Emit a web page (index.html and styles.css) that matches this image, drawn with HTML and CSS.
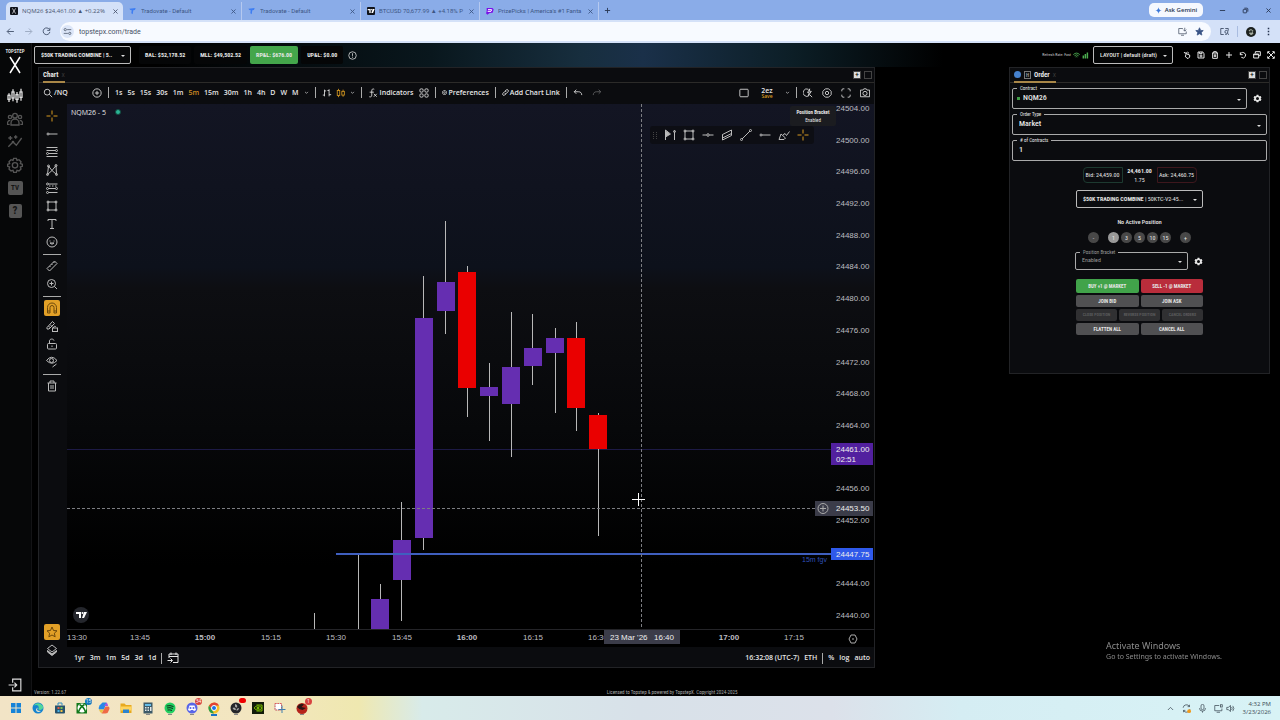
FILE: index.html
```
<!DOCTYPE html>
<html lang="en">
<head>
    <meta charset="UTF-8">
    <meta name="viewport" content="width=device-width, initial-scale=1.0">
    <title>NQM26 $24,461.00 ▲ +0.22%</title>
    <link rel="stylesheet" href="styles.css">
</head>
<body>
    <!-- Shared icons -->
    <svg class="sprite" aria-hidden="true">
        <symbol id="close" viewBox="0 0 24 24"><path d="M5 5l14 14M19 5L5 19"/></symbol>
        <symbol id="plus" viewBox="0 0 24 24"><path d="M12 3v18M3 12h18"/></symbol>
        <symbol id="chevron" viewBox="0 0 24 24"><path d="M5 9l7 7 7-7"/></symbol>
        <symbol id="chevron-up" viewBox="0 0 24 24"><path d="M5 16l7-7 7 7"/></symbol>
        <symbol id="back" viewBox="0 0 24 24"><path d="M21 12H4M11 4l-8 8 8 8"/></symbol>
        <symbol id="forward" viewBox="0 0 24 24"><path d="M3 12h17M13 4l8 8-8 8"/></symbol>
        <symbol id="reload" viewBox="0 0 24 24"><path d="M20 7a9 9 0 1 0 1 6M21 2v7h-7"/></symbol>
        <symbol id="tune" viewBox="0 0 24 24"><circle cx="6" cy="7" r="3"/><circle cx="18" cy="17" r="3"/><path d="M11 7h11M2 17h11"/></symbol>
        <symbol id="monitor" viewBox="0 0 24 24"><path d="M13 4H2v14h20v-6M8 22h8M18 2v9M14 7l4 4 4-4"/></symbol>
        <symbol id="star" viewBox="0 0 24 24"><path d="M12 2l3 7 7 .6-5.300 4.800 1.600 7.200L12 18l-6.300 3.600 1.600-7.200L2 9.600 9 9z"/></symbol>
        <symbol id="reading" viewBox="0 0 24 24"><path d="M10 4H2v16h8M14 4h8v6M14 20h4"/><circle cx="17" cy="13" r="4"/><path d="M20 16l3 5"/></symbol>
        <symbol id="dots" viewBox="0 0 24 24"><path class="solid" d="M10 2h4v4h-4zM10 10h4v4h-4zM10 18h4v4h-4z"/></symbol>
        <symbol id="minimize" viewBox="0 0 24 24"><path d="M3 12h18"/></symbol>
        <symbol id="restore" viewBox="0 0 24 24"><rect x="4" y="8" width="12" height="12" rx="2"/><path d="M8 4h9a3 3 0 0 1 3 3v9"/></symbol>
        <symbol id="tradovate" viewBox="0 0 24 24"><path fill="#3d7df2" stroke="none" d="M1 5l19-2-2 6-5 1-2 12-4-3 1-9-4-1z"/></symbol>
        <symbol id="tv" viewBox="0 0 24 24"><path class="solid" d="M2 6h9v12H7v-8H2zM17 6h6l-5 12h-5z"/><circle class="solid" cx="14" cy="8" r="2"/></symbol>
        <symbol id="candles" viewBox="0 0 24 24"><path d="M3 8v3M3 17v4M9 2v4M9 15v5M15 6v4M15 17v5M21 1v5M21 14v5"/><rect x="1.500" y="11" width="3" height="6"/><rect x="7.500" y="6" width="3" height="9"/><rect x="13.500" y="10" width="3" height="7"/><rect x="19.500" y="6" width="3" height="8"/></symbol>
        <symbol id="people" viewBox="0 0 24 24"><circle cx="12" cy="7" r="3.500"/><circle cx="4.500" cy="9" r="2.500"/><circle cx="19.500" cy="9" r="2.500"/><path d="M6 21v-3a6 6 0 0 1 12 0v3zM5 14c-3 0-4.500 2-4.500 6H4M19 14c3 0 4.500 2 4.500 6H20"/></symbol>
        <symbol id="insights" viewBox="0 0 24 24"><path d="M2 19l7-7 5 5 8-11M5 3v6M2 6h6M13 2v5M10.500 4.500h5"/><circle cx="9" cy="12" r="1"/></symbol>
        <symbol id="gear" viewBox="0 0 24 24"><path d="M10 2h4l1 3 3-1 3 3-1 3 3 1v3l-3 1 1 3-3 3-3-1-1 3h-4l-1-3-3 1-3-3 1-3-3-1v-3l3-1-1-3 3-3 3 1z"/><circle cx="12" cy="12.500" r="4"/></symbol>
        <symbol id="cog" viewBox="0 0 24 24"><path class="solid" fill-rule="evenodd" d="M9.500 2h5l.7 3 2 1.200 3-1L22.500 9.500 20.300 12l2.200 2.500-2.300 4.300-3-1-2 1.200-.7 3h-5l-.7-3-2-1.200-3 1-2.300-4.300L3.700 12 1.500 9.500l2.300-4.300 3 1 2-1.200zM12 8a4 4 0 1 0 0 8 4 4 0 0 0 0-8z"/></symbol>
        <symbol id="exit" viewBox="0 0 24 24"><path d="M8 8V2h14v20H8v-6M1 12h14M11 8l4 4-4 4"/></symbol>
        <symbol id="info" viewBox="0 0 24 24"><circle cx="12" cy="12" r="10"/><path d="M12 6v7M12 15v3"/></symbol>
        <symbol id="wifi" viewBox="0 0 24 24"><path d="M1 9a16 16 0 0 1 22 0M5 13a10 10 0 0 1 14 0M9 17a5 5 0 0 1 6 0"/></symbol>
        <symbol id="bars" viewBox="0 0 24 24"><path class="solid" d="M2 12h5v10H2zM9 7h5v15H9zM16 2h5v20h-5z"/></symbol>
        <symbol id="touch" viewBox="0 0 24 24"><path d="M9 13V4l3 5 8 3v6l-4 4h-4l-6-7zM3 3l4 5M13 3l5 4"/></symbol>
        <symbol id="save" viewBox="0 0 24 24"><path d="M3 3h14l4 4v14H3zM7 3v5h8V3"/><circle cx="12" cy="15" r="3"/></symbol>
        <symbol id="trash" viewBox="0 0 24 24"><path d="M3 6h18M8 6V2h8v4M5 6v16h14V6M10 10v8M14 10v8"/></symbol>
        <symbol id="undo" viewBox="0 0 24 24"><path d="M4 4v7h7M4 11a8 8 0 1 1 3 8"/></symbol>
        <symbol id="windows" viewBox="0 0 24 24"><path d="M7 7V2h15v12h-5M2 9h15v12H2zM2 11h15"/></symbol>
        <symbol id="expand" viewBox="0 0 24 24"><path d="M3 3l18 18M21 3L3 21M2 8V2h6M16 2h6v6M22 16v6h-6M8 22H2v-6"/></symbol>
        <symbol id="search" viewBox="0 0 24 24"><circle cx="10" cy="10" r="7"/><path d="M15 15l7 7"/></symbol>
        <symbol id="add" viewBox="0 0 24 24"><circle cx="12" cy="12" r="10"/><path d="M12 7v10M7 12h10"/></symbol>
        <symbol id="ohlc" viewBox="0 0 24 24"><path d="M6 4v16M2 17h4M6 7h4M17 3v17M13 6h4M17 16h5"/></symbol>
        <symbol id="candle-type" viewBox="0 0 24 24"><path d="M6 2v4M6 18v4M17 4v4M17 17v4"/><rect x="3" y="6" width="6" height="12"/><rect x="14" y="8" width="6" height="9"/></symbol>
        <symbol id="fx" viewBox="0 0 24 24"><path d="M15 3c-4-2-6 0-6 4v10c0 4-2 5-6 4M4 10h10M14 14l7 7M21 14l-7 7"/></symbol>
        <symbol id="grid" viewBox="0 0 24 24"><rect x="2" y="2" width="8" height="8" rx="3"/><rect x="14" y="2" width="8" height="8" rx="3"/><rect x="2" y="14" width="8" height="8" rx="3"/><rect x="14" y="14" width="8" height="8" rx="3"/></symbol>
        <symbol id="link" viewBox="0 0 24 24"><path d="M10 8l5-5c4-3 9 2 6 6l-6 6c-2 2-5 1-6-1M14 16l-5 5c-4 3-9-2-6-6l6-6c2-2 5-1 6 1"/></symbol>
        <symbol id="arrow-undo" viewBox="0 0 24 24"><path d="M8 4L3 9l5 5M3 9h10c5 0 8 3 8 8"/></symbol>
        <symbol id="arrow-redo" viewBox="0 0 24 24"><path d="M16 4l5 5-5 5M21 9H11c-5 0-8 3-8 8"/></symbol>
        <symbol id="square" viewBox="0 0 24 24"><rect x="2" y="3" width="20" height="18" rx="2"/></symbol>
        <symbol id="quick-search" viewBox="0 0 24 24"><path d="M15 18A9 9 0 1 1 13 3M16 16l6 6M16 2l-5 9h4l-2 7 7-10h-5z"/></symbol>
        <symbol id="settings" viewBox="0 0 24 24"><path d="M8 2h8l6 6v8l-6 6H8l-6-6V8z"/><circle cx="12" cy="12" r="4"/></symbol>
        <symbol id="fullscreen" viewBox="0 0 24 24"><path d="M2 8V5q0-3 3-3h3M16 2h3q3 0 3 3v3M22 16v3q0 3-3 3h-3M8 22H5q-3 0-3-3v-3"/></symbol>
        <symbol id="camera" viewBox="0 0 24 24"><path d="M1 5h6l2-3h6l2 3h6v16H1z"/><circle cx="12" cy="13" r="5"/></symbol>
        <symbol id="cross" viewBox="0 0 24 24"><path d="M12 1v8M12 15v8M1 12h8M15 12h8"/></symbol>
        <symbol id="ray" viewBox="0 0 24 24"><circle cx="4" cy="12" r="2"/><path d="M6 12h17"/></symbol>
        <symbol id="fib" viewBox="0 0 24 24"><path d="M1 3h22M1 9h18M5 15h18M1 21h22"/><circle cx="21" cy="9" r="2"/><circle cx="3" cy="15" r="2"/></symbol>
        <symbol id="pattern" viewBox="0 0 24 24"><path d="M3 21L5 4l7 9 8-10 1 18-9-8z"/><circle cx="3" cy="21" r="2"/><circle cx="5" cy="4" r="2"/><circle cx="20" cy="3" r="2"/><circle cx="21" cy="21" r="2"/></symbol>
        <symbol id="position" viewBox="0 0 24 24"><circle cx="3" cy="4" r="2"/><circle cx="3" cy="13" r="2"/><circle cx="21" cy="13" r="2"/><circle cx="3" cy="21" r="2"/><path d="M5 4h18M5 13h14M5 21h18M6 8h3M12 8h3M18 8h3"/></symbol>
        <symbol id="rect" viewBox="0 0 24 24"><rect x="4" y="4" width="16" height="16"/><circle cx="4" cy="4" r="2"/><circle cx="20" cy="4" r="2"/><circle cx="4" cy="20" r="2"/><circle cx="20" cy="20" r="2"/></symbol>
        <symbol id="text-tool" viewBox="0 0 24 24"><path d="M4 6V3h16v3M12 3v18M8 21h8"/></symbol>
        <symbol id="smile" viewBox="0 0 24 24"><circle cx="12" cy="12" r="10"/><path d="M8 9v2M16 9v2M8 14h8q-4 5-8 0z"/></symbol>
        <symbol id="ruler" viewBox="0 0 24 24"><path d="M2 17L17 2l5 5L7 22zM7 12l2 2M11 8l2 2M15 4l2 2"/></symbol>
        <symbol id="zoom-in" viewBox="0 0 24 24"><circle cx="11" cy="11" r="8"/><path d="M17 17l5 5M11 7v8M7 11h8"/></symbol>
        <symbol id="magnet" viewBox="0 0 24 24"><path d="M3 22V11a9 9 0 0 1 18 0v11h-5V11a4 4 0 0 0-8 0v11zM3 18h5M16 18h5"/></symbol>
        <symbol id="draw-lock" viewBox="0 0 24 24"><path d="M2 15L13 3l4 4L6 18H2zM5 12l4 4M8 9l4 4M15 16v-2a3 3 0 0 1 5 0"/><rect x="13" y="16" width="10" height="7"/></symbol>
        <symbol id="lock" viewBox="0 0 24 24"><rect x="3" y="11" width="18" height="11" rx="2"/><path d="M7 11V6c0-5 8-5 9-1M12 15v3"/></symbol>
        <symbol id="eye" viewBox="0 0 24 24"><path d="M1 9q10-13 21 0Q12 20 1 9z"/><circle cx="11" cy="9" r="4"/><path d="M13 22l8-6"/></symbol>
        <symbol id="layers" viewBox="0 0 24 24"><path d="M12 2l9 7-9 7-9-7z"/><path class="filled" d="M3 13l9 7 9-7v3l-9 7-9-7z"/></symbol>
        <symbol id="calendar" viewBox="0 0 24 24"><path d="M4 12V4h18v17H12M4 9h18M8 1v5M18 1v5M1 17h9M7 13l4 4-4 4"/></symbol>
        <symbol id="flag" viewBox="0 0 24 24"><path d="M3 22V2l10 8-10 6M21 22V6M19 6l2-4 2 4z"/><path class="filled" d="M4 5l7 5-7 4z"/></symbol>
        <symbol id="hline" viewBox="0 0 24 24"><path d="M1 12h8M15 12h8"/><circle cx="12" cy="12" r="2.500"/></symbol>
        <symbol id="channel" viewBox="0 0 24 24"><path d="M3 11L21 2v7L3 18zM3 22l18-9M3 11v11M21 2v11"/></symbol>
        <symbol id="trend" viewBox="0 0 24 24"><path d="M4 20L20 4"/><circle cx="3" cy="21" r="2"/><circle cx="21" cy="3" r="2"/></symbol>
        <symbol id="brush" viewBox="0 0 24 24"><path d="M2 21L6 10l9 8-3 3zM10 12l4-3 3 4 6-8"/></symbol>
        <symbol id="sync" viewBox="0 0 24 24"><path d="M3 10a9 9 0 0 1 17-3M20 2v5h-5M21 14a9 9 0 0 1-17 3M4 22v-5h5"/><circle cx="19" cy="19" r="5" fill="#f09a1a" stroke="none"/></symbol>
        <symbol id="mic" viewBox="0 0 24 24"><rect x="8" y="1" width="8" height="14" rx="4"/><path d="M4 11a8 8 0 0 0 16 0M12 19v4"/></symbol>
        <symbol id="network" viewBox="0 0 24 24"><path d="M14 4H2v14h19v-6M7 22h9"/><rect x="17" y="2" width="5" height="6"/></symbol>
        <symbol id="speaker" viewBox="0 0 24 24"><path d="M2 9h4l6-5v16l-6-5H2zM15 8q3 4 0 8M18 5q6 7 0 14"/></symbol>
    </svg>

    <!-- Browser window -->
    <div class="browser">
        <div class="tabs">
            <div class="tab active">
                <svg class="favicon dark" viewBox="0 0 24 24"><path d="M7 4l10 16M17 4L7 20"/></svg>
                <span class="tab-title">NQM26 $24,461.00 ▲ +0.22%</span>
                <svg class="icon tiny"><use href="#close"/></svg>
            </div>
            <div class="tab">
                <svg class="favicon"><use href="#tradovate"/></svg>
                <span class="tab-title">Tradovate - Default</span>
                <svg class="icon tiny"><use href="#close"/></svg>
            </div>
            <div class="tab">
                <svg class="favicon"><use href="#tradovate"/></svg>
                <span class="tab-title">Tradovate - Default</span>
                <svg class="icon tiny"><use href="#close"/></svg>
            </div>
            <div class="tab">
                <svg class="favicon dark"><use href="#tv"/></svg>
                <span class="tab-title">BTCUSD 70,677.99 ▲ +4.18% P</span>
                <svg class="icon tiny"><use href="#close"/></svg>
            </div>
            <div class="tab">
                <svg class="favicon" viewBox="0 0 24 24"><path fill="#7a10e8" d="M2 3h17l4 4-3 10-9 1-7 5-4-4 2-6z"/><path stroke="#fff" stroke-width="3" fill="none" d="M6 8h11l-2 5H5"/></svg>
                <span class="tab-title">PrizePicks | America's #1 Fanta</span>
                <svg class="icon tiny"><use href="#close"/></svg>
            </div>
            <button class="new-tab" aria-label="New tab"><svg class="icon tiny"><use href="#plus"/></svg></button>
            <div class="window-buttons">
                <button class="gemini"><svg viewBox="0 0 24 24"><path fill="#3c78d8" d="M12 1q1 10 11 11-10 1-11 11Q11 13 1 12 11 11 12 1z"/></svg>Ask Gemini</button>
                <button aria-label="Minimize"><svg class="icon tiny"><use href="#minimize"/></svg></button>
                <button aria-label="Restore"><svg class="icon tiny"><use href="#restore"/></svg></button>
                <button aria-label="Close"><svg class="icon tiny"><use href="#close"/></svg></button>
            </div>
        </div>
        <div class="address-bar">
            <button aria-label="Back"><svg class="icon small"><use href="#back"/></svg></button>
            <button class="faded" aria-label="Forward"><svg class="icon small"><use href="#forward"/></svg></button>
            <button aria-label="Reload"><svg class="icon small"><use href="#reload"/></svg></button>
            <div class="omnibox">
                <span class="site-info"><svg class="icon small"><use href="#tune"/></svg></span>
                <input type="text" aria-label="Address" value="topstepx.com/trade">
                <svg class="icon small"><use href="#monitor"/></svg>
                <svg class="icon small bookmark"><use href="#star"/></svg>
            </div>
            <div class="extensions">
                <svg class="icon small"><use href="#reading"/></svg>
                <span class="line"></span>
                <svg class="avatar" viewBox="0 0 24 24"><circle cx="12" cy="12" r="12" fill="#1c211f"/><path fill="#a5aca0" d="M6 8l6-3 6 4-2 3 2 4-6 4-5-5 3-3z"/><circle cx="12" cy="11" r="3" fill="#29302b"/></svg>
                <svg class="icon small"><use href="#dots"/></svg>
            </div>
        </div>
    </div>

    <!-- TopstepX -->
    <div class="app">
        <nav class="sidebar">
            <div class="logo"><span>TOPSTEP</span><svg viewBox="0 0 24 36"><path d="M2 2l20 32M22 2L2 34"/></svg></div>
            <a href="#" class="on" aria-label="Trade"><svg class="icon"><use href="#candles"/></svg></a>
            <a href="#" aria-label="Community"><svg class="icon"><use href="#people"/></svg></a>
            <a href="#" aria-label="Insights"><svg class="icon"><use href="#insights"/></svg></a>
            <a href="#" aria-label="Settings"><svg class="icon"><use href="#gear"/></svg></a>
            <a href="#"><span class="tv-badge">TV</span></a>
            <a href="#"><span class="tv-badge help">?</span></a>
            <a href="#" class="on exit" aria-label="Log out"><svg class="icon"><use href="#exit"/></svg></a>
        </nav>

        <div class="page">
            <header class="header">
                <div class="select account">
                    <select aria-label="Account"><option>$50K TRADING COMBINE | 5..</option></select>
                </div>
                <div class="stats">
                    <span class="stat">BAL: $52,178.52</span>
                    <span class="stat">MLL: $49,502.52</span>
                    <span class="stat profit">RP&amp;L: $676.00</span>
                    <span class="stat">UP&amp;L: $0.00</span>
                </div>
                <svg class="icon small info"><use href="#info"/></svg>
                <div class="header-right">
                    <span class="refresh">Refresh Rate: Fast</span>
                    <svg class="icon tiny green"><use href="#wifi"/></svg>
                    <svg class="icon tiny green"><use href="#bars"/></svg>
                    <div class="select layout">
                        <select aria-label="Layout"><option>LAYOUT | default (draft)</option></select>
                    </div>
                    <div class="header-icons">
                        <button aria-label="Click trading"><svg class="icon"><use href="#touch"/></svg></button>
                        <button aria-label="Save"><svg class="icon"><use href="#save"/></svg></button>
                        <button aria-label="Delete"><svg class="icon"><use href="#trash"/></svg></button>
                        <button aria-label="Add"><svg class="icon"><use href="#plus"/></svg></button>
                        <button aria-label="Reset"><svg class="icon"><use href="#undo"/></svg></button>
                        <button aria-label="Windows"><svg class="icon"><use href="#windows"/></svg></button>
                        <button aria-label="Full screen"><svg class="icon"><use href="#expand"/></svg></button>
                    </div>
                </div>
            </header>

            <main class="workspace">
                <section class="panel chart-panel">
                    <div class="panel-tabs">
                        <span class="panel-tab">Chart <i>X</i></span>
                        <button class="dock add" aria-label="Add tab">+</button>
                        <button class="dock" aria-label="Maximize"></button>
                    </div>
                    <div class="chart-toolbar">
                        <button class="symbol"><svg class="icon small"><use href="#search"/></svg>/NQ</button>
                        <button aria-label="Compare"><svg class="icon"><use href="#add"/></svg></button>
                        <span class="line"></span>
                        <div class="intervals">
                            <button>1s</button><button>5s</button><button>15s</button><button>30s</button><button>1m</button><button class="selected">5m</button><button>15m</button><button>30m</button><button>1h</button><button>4h</button><button>D</button><button>W</button><button>M</button>
                            <svg class="icon mini"><use href="#chevron"/></svg>
                        </div>
                        <span class="line"></span>
                        <div class="chart-types">
                            <svg class="icon small"><use href="#ohlc"/></svg>
                            <svg class="icon small gold"><use href="#candle-type"/></svg>
                            <svg class="icon mini"><use href="#chevron"/></svg>
                        </div>
                        <span class="line"></span>
                        <button class="indicators"><svg class="icon small"><use href="#fx"/></svg>Indicators</button>
                        <button aria-label="Templates"><svg class="icon small"><use href="#grid"/></svg></button>
                        <span class="line"></span>
                        <button class="preferences"><svg class="icon mini"><use href="#gear"/></svg>Preferences</button>
                        <span class="line"></span>
                        <button class="chart-link"><svg class="icon tiny"><use href="#link"/></svg>Add Chart Link</button>
                        <span class="line"></span>
                        <div class="history">
                            <button aria-label="Undo"><svg class="icon small"><use href="#arrow-undo"/></svg></button>
                            <button class="faded" aria-label="Redo"><svg class="icon small"><use href="#arrow-redo"/></svg></button>
                        </div>
                        <div class="toolbar-right">
                            <svg class="icon"><use href="#square"/></svg>
                            <button class="save-layout">2ez<span>Save</span></button>
                            <svg class="icon mini"><use href="#chevron"/></svg>
                            <span class="line"></span>
                            <div class="chart-actions">
                                <button aria-label="Quick search"><svg class="icon"><use href="#quick-search"/></svg></button>
                                <button aria-label="Chart settings"><svg class="icon"><use href="#settings"/></svg></button>
                                <button aria-label="Full screen"><svg class="icon"><use href="#fullscreen"/></svg></button>
                                <button aria-label="Snapshot"><svg class="icon"><use href="#camera"/></svg></button>
                            </div>
                        </div>
                    </div>

                    <div class="chart-body">
                        <div class="draw-tools">
                            <button class="gold" aria-label="Cross"><svg class="icon"><use href="#cross"/></svg></button>
                            <button aria-label="Lines"><svg class="icon"><use href="#ray"/></svg></button>
                            <button aria-label="Fibonacci"><svg class="icon"><use href="#fib"/></svg></button>
                            <button aria-label="Patterns"><svg class="icon"><use href="#pattern"/></svg></button>
                            <button aria-label="Positions"><svg class="icon"><use href="#position"/></svg></button>
                            <button aria-label="Shapes"><svg class="icon"><use href="#rect"/></svg></button>
                            <button aria-label="Text"><svg class="icon"><use href="#text-tool"/></svg></button>
                            <button aria-label="Icons"><svg class="icon"><use href="#smile"/></svg></button>
                            <hr>
                            <button aria-label="Measure"><svg class="icon"><use href="#ruler"/></svg></button>
                            <button aria-label="Zoom in"><svg class="icon"><use href="#zoom-in"/></svg></button>
                            <hr>
                            <button class="highlight" aria-label="Magnet"><svg class="icon"><use href="#magnet"/></svg></button>
                            <button aria-label="Stay in drawing mode"><svg class="icon"><use href="#draw-lock"/></svg></button>
                            <button aria-label="Lock"><svg class="icon"><use href="#lock"/></svg></button>
                            <button aria-label="Hide"><svg class="icon"><use href="#eye"/></svg></button>
                            <hr>
                            <button aria-label="Remove"><svg class="icon"><use href="#trash"/></svg></button>
                            <div class="spacer"></div>
                            <button class="highlight" aria-label="Favorites"><svg class="icon"><use href="#star"/></svg></button>
                            <button aria-label="Object tree"><svg class="icon"><use href="#layers"/></svg></button>
                        </div>

                        <div class="chart-main">
                            <div class="plot">
                                <svg class="plot-svg" viewBox="67 104 807 543" preserveAspectRatio="xMaxYMin slice">
                                    <!-- last price -->
                                    <path class="last-line" d="M67 449.500H831"/>
                                    <!-- candles -->
                                    <path class="wicks" d="M314.500 613V629M358.500 554V629M380.500 584V629M401.500 502V621M423.500 276V550M445.500 221V334M467.500 266V417M489.500 363V441M511.500 312V457M532.500 314V385M555.500 328V413M576.500 322V431M598.500 413V536"/>
                                    <g class="up">
                                        <rect x="371" y="599" width="18" height="30"/>
                                        <rect x="393" y="540" width="18" height="40"/>
                                        <rect x="415" y="318" width="18" height="220"/>
                                        <rect x="437" y="282" width="18" height="29"/>
                                        <rect x="480" y="387" width="18" height="9"/>
                                        <rect x="502" y="367" width="18" height="37"/>
                                        <rect x="524" y="348" width="18" height="18"/>
                                        <rect x="546" y="338" width="18" height="15"/>
                                    </g>
                                    <g class="down">
                                        <rect x="458" y="272" width="18" height="116"/>
                                        <rect x="567" y="338" width="18" height="70"/>
                                        <rect x="589" y="415" width="18" height="34"/>
                                    </g>
                                    <!-- fvg level and crosshair -->
                                    <path class="level" d="M336 554H831"/>
                                    <text class="level-name" x="802" y="562">15m fgv</text>
                                    <path class="crosshair" d="M67 508.500H816M641.500 104V629"/>
                                    <path class="pointer" d="M632 499.500H645M638.500 493V506"/>
                                    <path class="axis-line" d="M67 629.500H874"/>
                                    <!-- price scale -->
                                    <g class="axis">
                                        <text x="836" y="111">24504.00</text>
                                        <text x="836" y="143">24500.00</text>
                                        <text x="836" y="174">24496.00</text>
                                        <text x="836" y="206">24492.00</text>
                                        <text x="836" y="238">24488.00</text>
                                        <text x="836" y="269">24484.00</text>
                                        <text x="836" y="301">24480.00</text>
                                        <text x="836" y="333">24476.00</text>
                                        <text x="836" y="365">24472.00</text>
                                        <text x="836" y="396">24468.00</text>
                                        <text x="836" y="428">24464.00</text>
                                        <text x="836" y="491">24456.00</text>
                                        <text x="836" y="523">24452.00</text>
                                        <text x="836" y="586">24444.00</text>
                                        <text x="836" y="618">24440.00</text>
                                    </g>
                                    <rect x="831" y="443" width="42" height="22" fill="#52209f"/>
                                    <rect x="815" y="501" width="58" height="15" fill="#3b3c49"/>
                                    <rect x="831" y="548" width="42" height="12" fill="#2f59ea"/>
                                    <g class="axis marks">
                                        <text x="836" y="452">24461.00</text>
                                        <text x="836" y="462">02:51</text>
                                        <text x="836" y="511">24453.50</text>
                                        <text x="836" y="557">24447.75</text>
                                    </g>
                                    <path class="axis-add" d="M820 508.500h6M823 505.500v6M828 508.500a5 5 0 1 1-10 0a5 5 0 1 1 10 0"/>
                                    <!-- time scale -->
                                    <g class="axis time">
                                        <text x="77" y="640">13:30</text>
                                        <text x="140" y="640">13:45</text>
                                        <text class="hour" x="205" y="640">15:00</text>
                                        <text x="271" y="640">15:15</text>
                                        <text x="336" y="640">15:30</text>
                                        <text x="402" y="640">15:45</text>
                                        <text class="hour" x="467" y="640">16:00</text>
                                        <text x="533" y="640">16:15</text>
                                        <text x="598" y="640">16:30</text>
                                        <text class="hour" x="729" y="640">17:00</text>
                                        <text x="794" y="640">17:15</text>
                                    </g>
                                    <rect x="604" y="630" width="76" height="14" fill="#3b3c49"/>
                                    <g class="axis marks">
                                        <text x="610" y="640">23 Mar '26</text>
                                        <text x="654" y="640">16:40</text>
                                    </g>
                                    <path class="axis-add" d="M851 635h4l2 4-2 4h-4l-2-4zM852 639h2"/>
                                    <circle cx="81" cy="615" r="8" fill="#24262c"/>
                                    <path fill="#fff" d="M76 612h5v6h-2v-4h-3zM84 612h3l-3 6h-2z"/>
                                    <circle cx="82.500" cy="613" r="1" fill="#fff"/>
                                </svg>
                                <div class="legend">NQM26 - 5 <span class="dot"></span></div>
                                <div class="tooltip"><b>Position Bracket</b>Enabled</div>
                                <div class="favorites">
                                    <span class="grip"></span>
                                    <svg class="icon"><use href="#flag"/></svg>
                                    <svg class="icon"><use href="#rect"/></svg>
                                    <svg class="icon"><use href="#hline"/></svg>
                                    <svg class="icon"><use href="#channel"/></svg>
                                    <svg class="icon"><use href="#trend"/></svg>
                                    <svg class="icon"><use href="#ray"/></svg>
                                    <svg class="icon"><use href="#brush"/></svg>
                                    <svg class="icon gold"><use href="#cross"/></svg>
                                </div>
                            </div>
                            <div class="range-bar">
                                <button>1yr</button><button>3m</button><button>1m</button><button>5d</button><button>3d</button><button>1d</button>
                                <span class="line"></span>
                                <button aria-label="Go to date"><svg class="icon"><use href="#calendar"/></svg></button>
                                <div class="range-right">
                                    <button>16:32:08 (UTC-7)</button><button>ETH</button>
                                    <span class="line"></span>
                                    <button>%</button><button>log</button><button>auto</button>
                                </div>
                            </div>
                        </div>
                    </div>
                </section>

                <section class="panel order-panel">
                    <div class="panel-tabs">
                        <span class="panel-tab"><span class="ball"></span><span class="key">H</span>Order <i>X</i></span>
                        <button class="dock add" aria-label="Add tab">+</button>
                        <button class="dock" aria-label="Maximize"></button>
                    </div>
                    <form class="order-form">
                        <div class="field-row">
                            <div class="field select contract">
                                <label for="contract">Contract</label>
                                <select id="contract"><option>NQM26</option></select>
                            </div>
                            <button type="button" aria-label="Contract settings"><svg class="icon"><use href="#cog"/></svg></button>
                        </div>
                        <div class="field select">
                            <label for="orderType">Order Type</label>
                            <select id="orderType"><option>Market</option></select>
                        </div>
                        <div class="field">
                            <label for="contracts"># of Contracts</label>
                            <input type="text" id="contracts" value="1">
                        </div>

                        <div class="quotes">
                            <span class="quote bid">Bid: 24,459.00</span>
                            <span class="last"><b>24,461.00</b>1.75</span>
                            <span class="quote ask">Ask: 24,460.75</span>
                        </div>

                        <div class="select order-account">
                            <select aria-label="Order account"><option>$50K TRADING COMBINE | 50KTC-V2-45...</option></select>
                            <span class="account-text"><b>$50K TRADING COMBINE</b> | 50KTC-V2-45...</span>
                        </div>
                        <p class="position">No Active Position</p>
                        <div class="sizes">
                            <button type="button" class="step">-</button>
                            <button type="button" class="selected">1</button>
                            <button type="button">3</button>
                            <button type="button">5</button>
                            <button type="button">10</button>
                            <button type="button">15</button>
                            <button type="button" class="step">+</button>
                        </div>
                        <div class="field-row bracket-row">
                            <div class="field select bracket">
                                <label for="bracket">Position Bracket</label>
                                <select id="bracket"><option>Enabled</option></select>
                            </div>
                            <button type="button" aria-label="Bracket settings"><svg class="icon"><use href="#cog"/></svg></button>
                        </div>

                        <div class="order-buttons">
                            <div class="button-row main">
                                <button type="button" class="buy">BUY +1 @ MARKET</button>
                                <button type="button" class="sell">SELL -1 @ MARKET</button>
                            </div>
                            <div class="button-row">
                                <button type="button">JOIN BID</button>
                                <button type="button">JOIN ASK</button>
                            </div>
                            <div class="button-row">
                                <button type="button" disabled>CLOSE POSITION</button>
                                <button type="button" disabled>REVERSE POSITION</button>
                                <button type="button" disabled>CANCEL ORDERS</button>
                            </div>
                            <div class="button-row">
                                <button type="button">FLATTEN ALL</button>
                                <button type="button">CANCEL ALL</button>
                            </div>
                        </div>
                    </form>
                </section>
            </main>

            <footer class="footer">
                <span>Version: 1.22.67</span>
                <span class="license">Licensed to Topstep &amp; powered by TopstepX. Copyright 2024-2025</span>
            </footer>
        </div>
    </div>

    <div class="activate"><strong>Activate Windows</strong>Go to Settings to activate Windows.</div>

    <!-- Windows taskbar -->
    <div class="taskbar">
        <div class="task-icons">
            <svg viewBox="0 0 24 24"><path fill="#1583d8" d="M2 2h9v9H2zM13 2h9v9h-9zM2 13h9v9H2zM13 13h9v9h-9z"/></svg>
            <svg viewBox="0 0 24 24"><circle cx="12" cy="12" r="11" fill="#1683cf"/><path fill="#53d69b" d="M3 7q9-9 18 0 4 7-4 9-5 0-4-3 2-6-4-7z"/><path fill="#f2ead0" d="M12 11q-6 7 6 7-8 5-10-2 0-4 4-5z"/></svg>
            <svg viewBox="0 0 24 24"><path fill="#29536d" d="M2 7h20v14q0 2-2 2H4q-2 0-2-2z"/><path fill="none" stroke="#338fc3" stroke-width="2" d="M8 7V2h8v5"/><path fill="#e85c41" d="M7 10h4v4H7z"/><path fill="#7ec24f" d="M13 10h4v4h-4z"/><path fill="#4cb6e8" d="M7 16h4v4H7z"/><path fill="#f3c342" d="M13 16h4v4h-4z"/></svg>
            <span class="task"><svg viewBox="0 0 24 24"><rect x="1" y="2" width="21" height="21" fill="#12791a"/><circle cx="12" cy="12" r="9" fill="#fff"/><path stroke="#12791a" stroke-width="3" fill="none" d="M5 20Q8 10 17 5M19 20Q16 10 7 5"/></svg><span class="badge blue">15</span></span>
            <svg viewBox="0 0 24 24"><path fill="#2788e6" d="M9 1h8l-5 14H2q-2-2 1-8z"/><path fill="#a356df" d="M17 1q3 2 3 7h-8z"/><path fill="#ef6a46" d="M15 9h6q4 2 0 9-1 5-6 5H7z"/><path fill="#e9c346" d="M2 15h9l-3 7q-4 0-6-7z"/></svg>
            <svg viewBox="0 0 24 24"><path fill="#e7a91e" d="M1 3h8l3 3h11v16H1z"/><path fill="#ffd45d" d="M1 9h22v8H1z"/><path fill="#2b83cf" d="M6 15h12v7H6z"/></svg>
            <svg class="running" viewBox="0 0 24 24"><rect x="3" y="1" width="18" height="22" fill="#3d5a69"/><path fill="#64bce8" d="M6 4h12v4H6z"/><path fill="#e5e8e8" d="M6 10h3v3H6zM11 10h3v3h-3zM6 15h3v3H6zM11 15h3v3h-3zM16 10h3v8h-3z"/></svg>
            <svg class="running" viewBox="0 0 24 24"><circle cx="12" cy="12" r="11" fill="#20ce60"/><path fill="none" stroke="#102d1b" stroke-width="2" d="M5 8q7-2 14 1M6 12q6-2 12 1M7 16q5-1 9 1"/></svg>
            <span class="task running"><svg viewBox="0 0 24 24"><circle cx="12" cy="12" r="11" fill="#5865e8"/><path fill="#fff" d="M7 7h10l3 9-4 2-2-2h-4l-2 2-4-2z"/><circle cx="9" cy="12" r="2" fill="#5865e8"/><circle cx="15" cy="12" r="2" fill="#5865e8"/></svg><span class="badge">34</span></span>
            <svg class="current" viewBox="0 0 24 24"><circle cx="12" cy="12" r="11" fill="#f5c229"/><path fill="#e24335" d="M2 7Q7 0 14 1q6 1 8 6H12L7 14z"/><path fill="#2b9e4b" d="M2 7l6 9 4 7Q3 23 1 14 0 10 2 7z"/><circle cx="12" cy="12" r="5" fill="#1a73e8" stroke="#fff" stroke-width="2"/></svg>
            <span class="task running"><svg viewBox="0 0 24 24"><circle cx="12" cy="12" r="11" fill="#25262a"/><path fill="#aaa" d="M10 4q6 1 4 7-5 1-4-7zM5 12q5-3 7 3-4 3-7-3zM18 12q-1 6-5 5 0-5 5-5z"/></svg><span class="badge red"></span></span>
            <svg viewBox="0 0 24 24"><rect width="24" height="24" fill="#121a0a"/><path fill="none" stroke="#78b900" stroke-width="2" d="M4 12q7-9 16 0-8 9-16 0zM9 6h11v12H9"/><circle cx="12" cy="12" r="3" fill="#78b900"/></svg>
            <svg viewBox="0 0 24 24"><path fill="#fff" stroke="#8a9aaa" d="M2 3h13v13H2z"/><path fill="none" stroke="#e65a58" stroke-width="2" stroke-dasharray="3 2" d="M2 3h13v13H2z"/><path fill="none" stroke="#3e7eae" stroke-width="2" d="M16 7v15M9 15h14"/></svg>
            <span class="task running"><svg viewBox="0 0 24 24"><circle cx="12" cy="13" r="11" fill="#b5241b"/><path fill="#2b1616" d="M2 10q7-10 14-5l-5 5 9 2-7 4q-6 0-11-6z"/></svg><span class="badge">1</span></span>
        </div>
        <div class="tray">
            <svg class="icon small"><use href="#chevron-up"/></svg>
            <svg class="icon small"><use href="#sync"/></svg>
            <svg class="icon small"><use href="#mic"/></svg>
            <span class="tray-pair"><svg class="icon small"><use href="#network"/></svg><svg class="icon small"><use href="#speaker"/></svg></span>
            <span class="clock">4:32 PM<br>3/23/2026</span>
        </div>
    </div>
</body>
</html>
```

FILE: styles.css
```
* {
    box-sizing: border-box;
}

body {
    margin: 0;
    min-height: 100vh;
    display: flex;
    flex-direction: column;
    background: #000;
    color: #e6e6e6;
    font-family: "Roboto Condensed", "Liberation Sans Narrow", Roboto, sans-serif;
    font-size: 7px;
    line-height: 10px;
}

button, input, select {
    font: inherit;
    color: inherit;
    background: none;
    border: none;
    padding: 0;
    margin: 0;
    outline: none;
}

button {
    display: flex;
    align-items: center;
    justify-content: center;
    cursor: pointer;
    white-space: nowrap;
}

a {
    color: inherit;
    text-decoration: none;
}

.sprite {
    display: none;
}

.icon {
    width: 12px;
    height: 12px;
    flex: none;
    fill: none;
    stroke: currentColor;
    stroke-width: 2;
}

.icon.small {
    width: 9px;
    height: 9px;
}

.icon.tiny {
    width: 7px;
    height: 7px;
    stroke-width: 3;
}

.icon.mini {
    width: 5px;
    height: 5px;
    stroke-width: 3;
}

.solid {
    fill: currentColor;
    stroke: none;
}

.filled {
    fill: currentColor;
}

.faded {
    opacity: 0.4;
}

.gold {
    color: #d99a20;
}

.green {
    color: #4caf50;
}

.line {
    width: 1px;
    height: 11px;
    flex: none;
    background: #aaa;
}

/* Browser */
.browser {
    color: #26344f;
    font-family: "Open Sans", "Noto Sans", sans-serif;
}

.tabs {
    display: flex;
    align-items: flex-end;
    height: 20px;
    padding-left: 6px;
    background: #8aace8;
}

.tab {
    display: flex;
    align-items: center;
    width: 119px;
    height: 18px;
    padding: 0 4px 0 6px;
    gap: 4px;
    border-right: 1px solid #b5c9f0;
    color: #3d5684;
    font-family: Roboto, sans-serif;
}

.tab.active {
    width: 117px;
    padding-left: 4px;
    background: #d4e1f8;
    border: none;
    border-radius: 5px 5px 0 0;
    color: #4a5670;
    font-family: "Open Sans", sans-serif;
}

.tab-title {
    flex: 1;
    overflow: hidden;
    white-space: nowrap;
    font-size: 6px;
}

.favicon {
    width: 8px;
    height: 8px;
    flex: none;
}

.favicon.dark {
    background: #10131a;
    border-radius: 1px;
    color: #fff;
    fill: none;
    stroke: #fff;
    stroke-width: 2;
}

.new-tab {
    width: 16px;
    height: 20px;
}

.window-buttons {
    display: flex;
    align-items: center;
    gap: 16px;
    height: 20px;
    margin-left: auto;
    padding-right: 8px;
}

.gemini {
    gap: 3px;
    width: 54px;
    height: 14px;
    background: #f5f8fe;
    border-radius: 5px;
    font-size: 6px;
    font-weight: 600;
}

.gemini svg {
    width: 7px;
    height: 7px;
}

.address-bar {
    display: flex;
    align-items: center;
    gap: 9px;
    height: 23px;
    padding: 0 7px 0 6px;
    background: #d4e1f8;
}

.omnibox {
    display: flex;
    align-items: center;
    flex: 1;
    gap: 5px;
    height: 19px;
    padding: 0 7px 0 1px;
    background: #f7faff;
    border-radius: 10px;
    color: #465164;
}

.omnibox input {
    flex: 1;
    font-family: Roboto, sans-serif;
}

.omnibox .bookmark {
    margin-left: 3px;
}

.site-info {
    display: flex;
    align-items: center;
    justify-content: center;
    width: 13px;
    height: 13px;
    background: #dce6f8;
    border-radius: 50%;
}

.bookmark {
    fill: #3a5486;
    color: #3a5486;
}

.extensions {
    display: flex;
    align-items: center;
    gap: 8px;
}

.extensions .line {
    background: #a9bce0;
}

.avatar {
    width: 10px;
    height: 10px;
}

/* App shell */
.app {
    display: flex;
    flex: 1;
    background: #000;
}

.sidebar {
    display: flex;
    flex-direction: column;
    align-items: center;
    width: 32px;
    padding-right: 1px;
    background: #060708;
    border-right: 1px solid #131315;
    color: #555;
}

.sidebar a {
    display: flex;
    align-items: center;
    justify-content: center;
    height: 23px;
}

.sidebar .icon {
    width: 16px;
    height: 16px;
    stroke-width: 2;
}

.sidebar .on {
    color: #ddd;
}

.sidebar .exit {
    margin-top: auto;
}

.sidebar .exit .icon {
    width: 14px;
    height: 14px;
}

.logo {
    display: flex;
    flex-direction: column;
    align-items: center;
    height: 41px;
    padding-top: 3px;
    color: #ddd;
    font-size: 5px;
    font-weight: bold;
}

.logo svg {
    width: 12px;
    height: 18px;
    fill: none;
    stroke: #fff;
    stroke-width: 3;
}

.tv-badge {
    width: 15px;
    height: 14px;
    border-radius: 2px;
    background: #555;
    color: #141414;
    font-size: 7px;
    font-weight: bold;
    line-height: 14px;
    text-align: center;
}

.tv-badge.help {
    width: 13px;
    font-size: 11px;
}

.page {
    display: flex;
    flex: 1;
    flex-direction: column;
    min-width: 0;
}

.header {
    display: flex;
    align-items: center;
    height: 24px;
    padding: 0 5px 0 2px;
    background: linear-gradient(to right, #000 10%, #09171d 32%, #172e3e 44%, #1a3049 49%, #0c1e26 61%, #000 73%);
}

.select {
    position: relative;
}

.select select {
    width: 100%;
    height: 100%;
    appearance: none;
}

.select::after {
    content: "";
    position: absolute;
    right: 5px;
    top: 50%;
    border: 2px solid transparent;
    border-top-color: #ddd;
    pointer-events: none;
}

.account, .layout, .order-account {
    height: 18px;
    border: 1px solid #bbb;
    border-radius: 2px;
}

.account select, .layout select {
    padding: 0 12px 0 6px;
}

.account {
    width: 97px;
    background: #08090a;
    font-size: 6px;
    font-weight: bold;
}

.stats {
    display: flex;
    gap: 3px;
    margin: 0 5px 0 8px;
}

.stat {
    height: 18px;
    padding: 0 6px;
    background: #050607;
    border-radius: 2px;
    font-size: 6px;
    font-weight: bold;
    line-height: 18px;
    white-space: nowrap;
}

.stat.profit {
    background: #44a64b;
}

.header-right {
    display: flex;
    align-items: center;
    gap: 2px;
    margin-left: auto;
}

.refresh {
    font-size: 4px;
    color: #ccc;
}

.layout {
    width: 80px;
    margin-left: 2px;
    background: #050607;
    font-size: 6px;
    font-weight: 500;
}

.header-icons {
    display: flex;
    gap: 6px;
    margin-left: 8px;
}

.header-icons .icon {
    width: 8px;
    height: 8px;
    stroke-width: 3;
}

.workspace {
    display: grid;
    grid-template-columns: 837fr 261fr;
    column-gap: 134px;
    align-items: start;
    flex: 1;
    padding: 0 10px 0 6px;
}

/* Panels */
.panel {
    min-width: 0;
    background: #0b0c0f;
    border: 1px solid #222326;
}

.panel-tabs {
    display: flex;
    align-items: center;
    height: 15px;
    padding: 0 2px 0 4px;
    gap: 3px;
    border-bottom: 1px solid #2c2b29;
}

.panel-tab {
    display: flex;
    align-items: center;
    gap: 3px;
    height: 15px;
    margin-right: auto;
    padding-top: 1px;
    border-bottom: 2px solid #a98748;
    font-weight: bold;
}

.panel-tab i {
    color: #3c3c3c;
    font-size: 6px;
    font-style: normal;
    font-weight: normal;
}

.dock {
    width: 8px;
    height: 8px;
    border: 1px solid #444;
}

.dock.add {
    background: #ddd;
    color: #000;
    font-size: 8px;
}

.ball {
    width: 7px;
    height: 7px;
    border-radius: 50%;
    background: #4682cf;
}

.key {
    width: 7px;
    height: 8px;
    border: 1px solid #777;
    color: #999;
    font-size: 5px;
    line-height: 6px;
    text-align: center;
}

.chart-panel {
    height: calc(100vh - 119px);
    display: flex;
    flex-direction: column;
}

.chart-toolbar {
    display: flex;
    align-items: center;
    gap: 6px;
    height: 21px;
    padding: 0 4px 2px;
    font-family: "Open Sans", "Noto Sans", sans-serif;
    font-size: 7px;
    font-weight: 600;
}

.chart-toolbar .symbol {
    width: 43px;
    gap: 1px;
    justify-content: flex-start;
}

.chart-toolbar .icon {
    width: 10px;
    height: 10px;
}

.chart-toolbar .icon.tiny {
    width: 7px;
    height: 7px;
}

.chart-toolbar .icon.mini {
    width: 5px;
    height: 5px;
}

.intervals {
    display: flex;
    align-items: center;
    gap: 5px;
}

.intervals .selected {
    color: #d18c22;
}

.chart-types {
    display: flex;
    align-items: center;
    gap: 4px;
}

.chart-toolbar .indicators {
    gap: 2px;
}

.preferences, .chart-link {
    gap: 1px;
}

.history {
    display: flex;
    gap: 9px;
}

.toolbar-right {
    display: flex;
    align-items: center;
    gap: 6px;
    margin-left: auto;
}

.chart-actions {
    display: flex;
    gap: 9px;
}

.save-layout {
    flex-direction: column;
    width: 24px;
    line-height: 7px;
}

.save-layout span {
    color: #d99a20;
    font-size: 5px;
    line-height: 5px;
}

.chart-body {
    display: flex;
    flex: 1;
    min-height: 0;
}

.draw-tools {
    display: flex;
    flex-direction: column;
    align-items: center;
    width: 28px;
    padding: 3px 2px 8px 0;
    color: #bbb;
}

.draw-tools button {
    width: 18px;
    height: 18px;
    flex: none;
}

.draw-tools .gold {
    color: #d99a20;
}

.draw-tools hr {
    width: 18px;
    height: 1px;
    margin: 3px 0 2px;
    border: none;
    background: #aaa;
}

.draw-tools .highlight {
    width: 16px;
    height: 16px;
    margin: 1px 0;
    background: #e2a027;
    border-radius: 2px;
    color: #6d480b;
}

.spacer {
    flex: 1;
}

.chart-main {
    display: flex;
    flex: 1;
    flex-direction: column;
    min-width: 0;
}

.plot {
    position: relative;
    flex: 1;
    min-height: 0;
    background: linear-gradient(#131523 0%, #0d111b 30%, #0d0e12 34%, #07080a 60%, #000 85%);
}

.plot-svg {
    display: block;
    width: 100%;
    height: 100%;
}

.last-line {
    stroke: #1d1a45;
}

.wicks {
    stroke: #b8b8b8;
}

.up {
    fill: #652eb1;
}

.down {
    fill: #ea0000;
}

.level {
    stroke: #3f5fbf;
    stroke-width: 2;
}

.level-name {
    fill: #2f4fb8;
    font-family: "Liberation Sans", Arial, sans-serif;
    font-size: 7px;
}

.crosshair {
    fill: none;
    stroke: #7c7d82;
    stroke-dasharray: 3 2;
}

.pointer {
    fill: none;
    stroke: #fff;
}

.axis-line {
    stroke: #242428;
}

.axis {
    fill: #bdbdc0;
    font-family: "Liberation Sans", Arial, sans-serif;
    font-size: 8px;
}

.axis.time {
    text-anchor: middle;
}

.axis .hour {
    font-weight: bold;
}

.axis.marks {
    fill: #eee;
}

.axis-add {
    fill: none;
    stroke: #aaa;
}

.legend {
    position: absolute;
    top: 4px;
    left: 4px;
    font-family: "Open Sans", sans-serif;
}

.dot {
    display: inline-block;
    width: 6px;
    height: 6px;
    margin-left: 7px;
    border: 1px solid #12493f;
    border-radius: 50%;
    background: #2bb596;
}

.tooltip {
    position: absolute;
    top: 2px;
    right: 38px;
    width: 46px;
    padding: 2px 0;
    background: #1b1c20;
    border-radius: 2px;
    font-size: 5px;
    line-height: 8px;
    text-align: center;
    white-space: nowrap;
}

.tooltip b {
    display: block;
}

.favorites {
    position: absolute;
    top: 22px;
    right: 60px;
    display: flex;
    align-items: center;
    gap: 7px;
    height: 18px;
    padding: 0 5px 0 3px;
    background: #0d0e14;
    border-radius: 3px;
    color: #bbb;
}

.favorites .gold {
    color: #d99a20;
}

.grip {
    width: 4px;
    height: 7px;
    border: 1px dotted #444;
    border-width: 0 1px;
}

.range-bar {
    display: flex;
    align-items: center;
    gap: 5px;
    height: 20px;
    padding: 2px 4px 0 7px;
    font-family: "Open Sans", "Noto Sans", sans-serif;
    font-weight: 600;
}

.range-right {
    display: flex;
    align-items: center;
    gap: 5px;
    margin-left: auto;
}

/* Order ticket */
.order-panel {
    padding-bottom: 38px;
}

.order-form {
    display: flex;
    flex-direction: column;
    align-items: center;
    padding: 5px 2px 0;
}

.field-row {
    display: flex;
    align-items: center;
    width: 100%;
}

.field-row button {
    flex: 1;
}

.field-row .icon {
    width: 9px;
    height: 9px;
}

.field {
    position: relative;
    width: 100%;
    height: 21px;
    margin-bottom: 5px;
    border: 1px solid #aaa;
    border-radius: 2px;
}

.field label {
    position: absolute;
    top: -5px;
    left: 4px;
    padding: 0 3px;
    background: #0b0c0f;
    font-size: 5px;
    line-height: 8px;
}

.field select, .field input {
    width: 100%;
    height: 100%;
    padding: 0 6px 2px;
    font-size: 8px;
    font-weight: 500;
}

.field.contract {
    width: 235px;
}

.field.contract select {
    padding-left: 10px;
}

.contract::before {
    content: "";
    position: absolute;
    top: 8px;
    left: 4px;
    width: 3px;
    height: 3px;
    background: #3f9c46;
}

.contract + button {
    margin-bottom: 5px;
}

.quotes {
    display: flex;
    align-items: center;
    gap: 3px;
    margin-bottom: 6px;
    font-size: 6px;
    line-height: 9px;
    text-align: center;
}

.quote {
    width: 40px;
    height: 16px;
    border: 1px solid #1d3a30;
    border-radius: 4px 0 0 4px;
    line-height: 14px;
    white-space: nowrap;
}

.quote.ask {
    border-color: #3e171d;
    border-radius: 0 4px 4px 0;
}

.last {
    width: 28px;
}

.last b {
    display: block;
}

.order-account {
    width: 127px;
    font-size: 6px;
}

.order-account select {
    opacity: 0;
}

.account-text {
    position: absolute;
    top: 3px;
    left: 6px;
    white-space: nowrap;
    pointer-events: none;
}

.position {
    margin: 9px 0 5px;
    font-weight: 500;
    font-size: 6px;
}

.sizes {
    display: flex;
    gap: 2px;
    margin-bottom: 9px;
}

.sizes button {
    width: 11px;
    height: 11px;
    border-radius: 50%;
    background: #484848;
    font-size: 6px;
}

.sizes .selected {
    background: #999;
}

.sizes .step:first-child {
    margin-right: 7px;
}

.sizes .step:last-child {
    margin-left: 7px;
}

.bracket-row {
    width: 129px;
    margin-bottom: 9px;
}

.field.bracket {
    width: 113px;
    height: 18px;
    margin: 0;
    color: #999;
}

.field.bracket select {
    font-size: 6px;
    font-weight: normal;
}

.bracket + button {
    margin-left: 4px;
}

.order-buttons {
    display: flex;
    flex-direction: column;
    gap: 2px;
    width: 127px;
}

.button-row {
    display: flex;
    gap: 2px;
}

.button-row button {
    flex: 1 1 0;
    min-width: 0;
    height: 12px;
    overflow: hidden;
    background: #505052;
    border-radius: 2px;
    font-size: 5px;
    font-weight: bold;
}

.button-row.main button {
    height: 14px;
}

.button-row .buy {
    background: #41a34a;
}

.button-row .sell {
    background: #b92d3b;
}

.button-row button:disabled {
    background: #303032;
    color: #5c5c5e;
    font-size: 4px;
}

.footer {
    display: grid;
    grid-template-columns: auto 1fr;
    height: 28px;
    padding: 19px 2px 0;
    font-size: 5px;
    color: #aaa;
}

.license {
    text-align: center;
}

.activate {
    position: fixed;
    right: 58px;
    bottom: 58px;
    color: #8c8c8c;
    font-family: "Noto Sans", "Open Sans", sans-serif;
    font-size: 7px;
}

.activate strong {
    display: block;
    font-size: 9px;
    font-weight: normal;
    line-height: 12px;
}

/* Taskbar */
.taskbar {
    display: flex;
    align-items: center;
    justify-content: space-between;
    height: 24px;
    padding: 0 9px 0 10px;
    background: linear-gradient(to right, #f2e4c6, #f3e6c0 20%, #efe8b0 28%, #d8ebea 33%, #d8e1e9 50%, #dce1ea 65%, #d5edf3 75%, #d8f3f6);
    color: #3d4b55;
    font-family: "Open Sans", sans-serif;
}

.task-icons {
    display: flex;
    gap: 10px;
}

.task-icons svg {
    display: block;
    width: 12px;
    height: 12px;
}

.task {
    position: relative;
}

.running {
    box-shadow: 0 5px 0 -4px #888;
}

.current {
    box-shadow: 0 5px 0 -3px #1a73c8;
}

.badge {
    position: absolute;
    top: -4px;
    right: -4px;
    min-width: 7px;
    height: 7px;
    border-radius: 4px;
    background: #d84340;
    color: #fff;
    font-size: 5px;
    line-height: 7px;
    text-align: center;
}

.badge.blue {
    background: #1478bd;
}

.badge.red {
    width: 5px;
    height: 5px;
    background: #e00;
}

.tray {
    display: flex;
    align-items: center;
    gap: 7px;
}

.tray-pair {
    display: flex;
    gap: 3px;
}

.clock {
    width: 29px;
    font-size: 6px;
    line-height: 8px;
    text-align: right;
}
```
